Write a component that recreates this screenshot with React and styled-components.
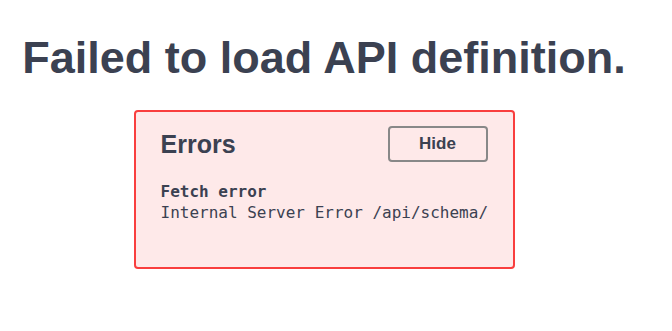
import React from 'react';
import styled, { createGlobalStyle } from 'styled-components';

const Global = createGlobalStyle`
  body {
    margin: 0;
    background: #fff;
    font-family: "Liberation Sans", Arial, sans-serif;
    color: #3b4151;
  }
`;

const Page = styled.div`
  display: flex;
  flex-direction: column;
  align-items: center;
  width: 648px;
  padding-top: 32px;
`;

const Title = styled.h1`
  margin: 0;
  font-size: 45px;
  font-weight: 700;
  line-height: 52px;
  color: #3b4151;
  white-space: nowrap;
`;

const ErrorBox = styled.div`
  box-sizing: border-box;
  width: 381px;
  height: 159px;
  margin-top: 26px;
  padding: 14px 25px 0 25px;
  border: 2px solid #f93e3e;
  border-radius: 4px;
  background: #fee9e9;
`;

const Header = styled.div`
  display: flex;
  align-items: center;
  justify-content: space-between;
`;

const Heading = styled.h4`
  margin: 0;
  font-size: 25px;
  font-weight: 700;
  color: #3b4151;
`;

const HideButton = styled.button`
  box-sizing: border-box;
  width: 100px;
  height: 36px;
  border: 2px solid #888;
  border-radius: 4px;
  background: transparent;
  font-family: "Liberation Sans", Arial, sans-serif;
  font-size: 17px;
  font-weight: 700;
  color: #3b4151;
  cursor: pointer;
`;

const ErrorList = styled.div`
  margin-top: 19px;
  font-family: "DejaVu Sans Mono", "Liberation Mono", monospace;
  font-size: 16px;
  line-height: 21px;
  color: #3b4151;
  white-space: nowrap;
`;

const ErrorTitle = styled.div`
  font-weight: 700;
`;

export default function App() {
  return (
    <>
      <Global />
      <Page>
        <Title>Failed to load API definition.</Title>
        <ErrorBox>
          <Header>
            <Heading>Errors</Heading>
            <HideButton>Hide</HideButton>
          </Header>
          <ErrorList>
            <ErrorTitle>Fetch error</ErrorTitle>
            <div>Internal Server Error /api/schema/</div>
          </ErrorList>
        </ErrorBox>
      </Page>
    </>
  );
}
